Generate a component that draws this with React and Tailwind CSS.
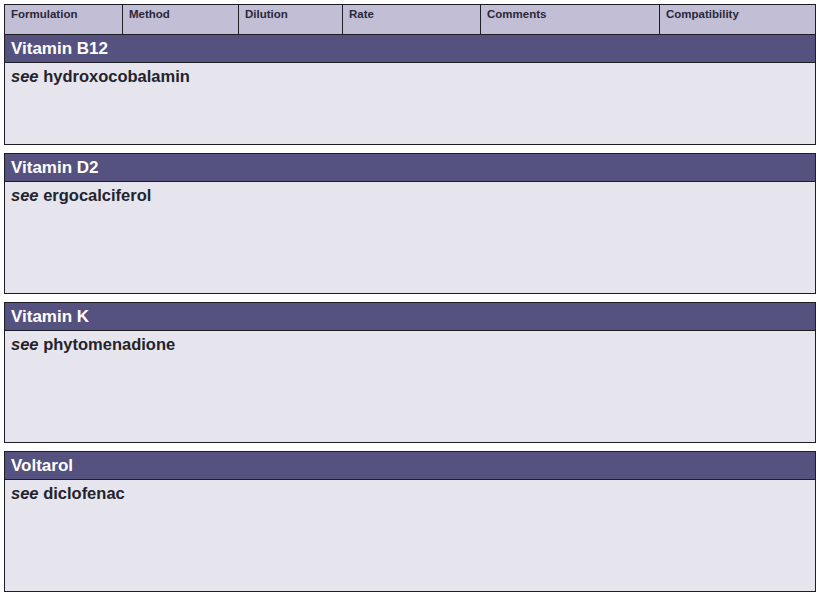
const columns = ['Formulation', 'Method', 'Dilution', 'Rate', 'Comments', 'Compatibility'];

const entries = [
  { name: 'Vitamin B12', see: 'hydroxocobalamin', body: 'h-[81px]' },
  { name: 'Vitamin D2', see: 'ergocalciferol', body: 'h-[111px]' },
  { name: 'Vitamin K', see: 'phytomenadione', body: 'h-[111px]' },
  { name: 'Voltarol', see: 'diclofenac', body: 'h-[111px]' },
];

const App = () => {
  return (
    <div className="h-[597px] w-[823px] bg-white pl-[4px] pt-[4px]" style={{ fontFamily: '"Liberation Sans", Arial, sans-serif' }}>
      <div className="w-[812px]">
        {entries.map((entry, i) => (
          <div key={entry.name} className={`border-x border-b border-[#1d1d24] ${i === 0 ? 'border-t' : 'mt-2 border-t'}`}>
            {i === 0 && (
              <div className="grid grid-cols-[117px_116px_104px_138px_179px_1fr] h-[30px] border-b border-[#1d1d24] bg-[#c1bed6]">
                {columns.map((col, j) => (
                  <div key={col} className={`pl-[6px] pt-[1px] text-[11.5px] font-bold text-[#2a2838] ${j > 0 ? 'border-l border-[#1d1d24]' : ''}`}>
                    {col}
                  </div>
                ))}
              </div>
            )}
            <div className="border-b border-[#1d1d24] bg-[#56527f] h-[28px] flex items-center px-[6px] text-[17px] font-bold text-white">
              {entry.name}
            </div>
            <div className={`${entry.body} bg-[#e6e5ee] px-[6px] pt-[1px] text-[16.5px] font-bold text-[#24232b]`}>
              <span className="italic">see</span> {entry.see}
            </div>
          </div>
        ))}
      </div>
    </div>
  );
};

export default App;
